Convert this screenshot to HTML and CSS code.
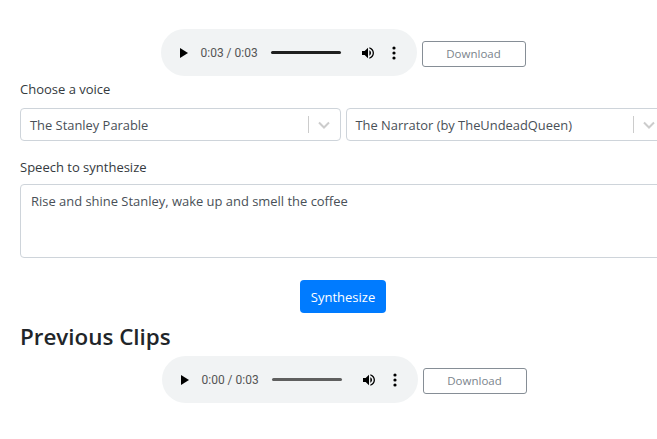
FILE: index.html
```html
<!DOCTYPE html>
<html lang="en">
<head>
  <meta charset="UTF-8" />
  <title>Speech synthesis</title>
  <link rel="stylesheet" href="styles.css">
</head>
<body>
  <main class="page">
    <div class="clip">
      <div class="player">
        <svg class="play" width="10" height="12" viewBox="0 0 10 12"><path d="M1 1v10l8-5z"/></svg>
        <span class="time">0:03 / 0:03</span>
        <div class="track"></div>
        <svg class="volume" width="16" height="16" viewBox="0 0 24 24"><path d="M3 9v6h4l5 5V4L7 9H3zm13.5 3c0-1.77-1.02-3.29-2.5-4.03v8.05c1.48-.73 2.5-2.25 2.5-4.02zM14 3.23v2.06c2.89.86 5 3.54 5 6.71s-2.11 5.85-5 6.71v2.06c4.01-.91 7-4.49 7-8.77s-2.99-7.86-7-8.77z"/></svg>
        <svg class="more" width="4" height="14" viewBox="0 0 4 14"><circle cx="2" cy="2" r="1.6"/><circle cx="2" cy="7" r="1.6"/><circle cx="2" cy="12" r="1.6"/></svg>
      </div>
      <button class="download">Download</button>
    </div>

    <label class="field-label">Choose a voice</label>
    <div class="selects">
      <div class="select">
        <span class="select-value">The Stanley Parable</span>
        <span class="select-sep"></span>
        <svg class="chevron" width="12" height="8" viewBox="0 0 12 8"><path d="M1 1.5l5 5 5-5"/></svg>
      </div>
      <div class="select">
        <span class="select-value">The Narrator (by TheUndeadQueen)</span>
        <span class="select-sep"></span>
        <svg class="chevron" width="12" height="8" viewBox="0 0 12 8"><path d="M1 1.5l5 5 5-5"/></svg>
      </div>
    </div>

    <label class="field-label speech-label">Speech to synthesize</label>
    <div class="speech">Rise and shine Stanley, wake up and smell the coffee</div>

    <div class="actions">
      <button class="synth">Synthesize</button>
    </div>

    <h2>Previous Clips</h2>
    <div class="clip clip-prev">
      <div class="player">
        <svg class="play" width="10" height="12" viewBox="0 0 10 12"><path d="M1 1v10l8-5z"/></svg>
        <span class="time">0:00 / 0:03</span>
        <div class="track track-idle"></div>
        <svg class="volume" width="16" height="16" viewBox="0 0 24 24"><path d="M3 9v6h4l5 5V4L7 9H3zm13.5 3c0-1.77-1.02-3.29-2.5-4.03v8.05c1.48-.73 2.5-2.25 2.5-4.02zM14 3.23v2.06c2.89.86 5 3.54 5 6.71s-2.11 5.85-5 6.71v2.06c4.01-.91 7-4.49 7-8.77s-2.99-7.86-7-8.77z"/></svg>
        <svg class="more" width="4" height="14" viewBox="0 0 4 14"><circle cx="2" cy="2" r="1.6"/><circle cx="2" cy="7" r="1.6"/><circle cx="2" cy="12" r="1.6"/></svg>
      </div>
      <button class="download">Download</button>
    </div>
  </main>
</body>
</html>
```

FILE: styles.css
```css
html, body {
  margin: 0;
  height: 439px;
  overflow: hidden;
  background-color: #fff;
}

body {
  font-family: 'Open Sans', 'Noto Sans', sans-serif;
  font-size: 13px;
  color: #212529;
}

.page {
  box-sizing: border-box;
  width: 686px;
  padding: 29px 20px 0;
}

.clip {
  display: flex;
  align-items: center;
  justify-content: center;
  gap: 5px;
}

.clip-prev {
  padding-left: 2px;
}

.player {
  box-sizing: border-box;
  width: 256px;
  height: 47px;
  display: flex;
  align-items: center;
  padding: 0 0 0 18px;
  background-color: #f1f3f4;
  border-radius: 24px;
}

.play {
  flex: none;
  fill: #000;
}

.time {
  width: 70px;
  margin-left: 12px;
  font-family: 'Roboto', sans-serif;
  font-size: 12px;
  color: #555;
}

.track {
  width: 70px;
  height: 3px;
  border-radius: 2px;
  background-color: #1f1f1f;
}

.track-idle {
  background-color: #5f5f5f;
}

.volume {
  margin-left: 19px;
  fill: #000;
}

.more {
  margin-left: 16px;
  fill: #000;
}

.download {
  box-sizing: border-box;
  width: 104px;
  height: 26px;
  margin-top: 3px;
  padding: 0 0 2px;
  background: #fff;
  border: 1px solid #868e96;
  border-radius: 3px;
  font-family: inherit;
  font-size: 11.5px;
  color: #7b848c;
}

.field-label {
  display: block;
  margin-top: 4px;
  line-height: 19px;
  color: #343a40;
}

.selects {
  display: flex;
  gap: 5px;
  margin-top: 9px;
}

.select {
  box-sizing: border-box;
  flex: 1;
  height: 33px;
  display: flex;
  align-items: center;
  padding: 0 10px 0 9px;
  border: 1px solid #ced4da;
  border-radius: 4px;
  color: #495057;
}

.select-value {
  flex: 1;
  font-size: 12.9px;
}

.select-sep {
  width: 1px;
  height: 17px;
  background-color: #ccc;
}

.chevron {
  margin-left: 9px;
  fill: none;
  stroke: #ccc;
  stroke-width: 2;
}

.speech-label {
  margin-top: 17px;
}

.speech {
  box-sizing: border-box;
  height: 74px;
  margin-top: 7px;
  padding: 7px 10px;
  border: 1px solid #ced4da;
  border-radius: 4px;
  font-size: 12.95px;
  line-height: 19px;
  color: #495057;
}

.actions {
  display: flex;
  justify-content: center;
  margin-top: 22px;
}

.synth {
  width: 86px;
  height: 33px;
  padding: 0;
  background-color: #007bff;
  border: none;
  border-radius: 4px;
  font-family: inherit;
  font-size: 13px;
  color: #fff;
}

h2 {
  margin: 8px 0 3px;
  font-size: 22.4px;
  font-weight: 600;
  line-height: 32px;
  color: #212529;
}
```
